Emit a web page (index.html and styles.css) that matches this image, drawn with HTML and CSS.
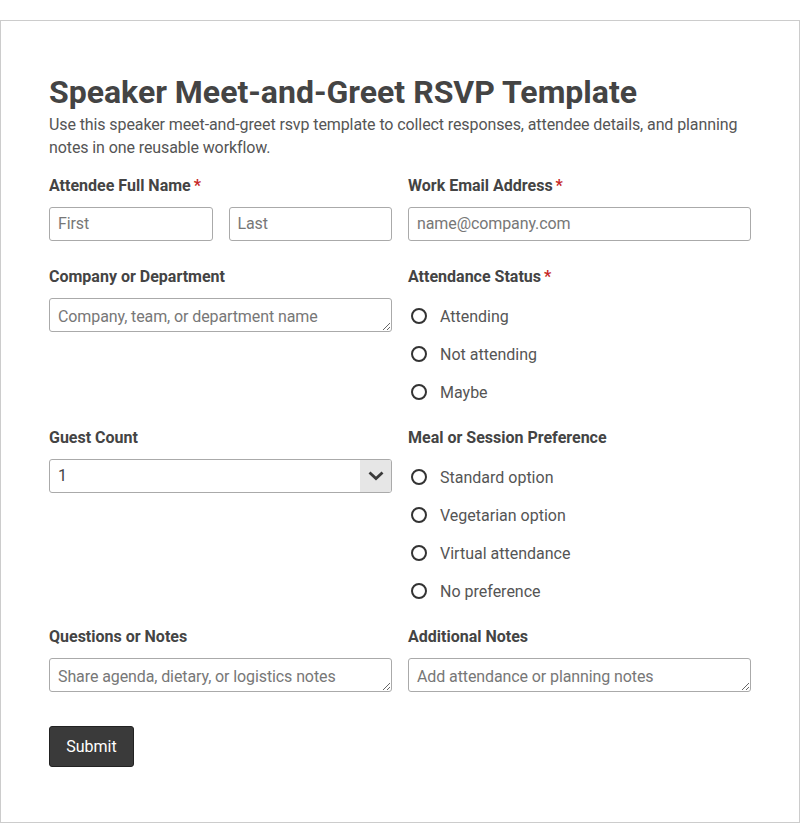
FILE: index.html
```html
<!DOCTYPE html>
<html lang="en">
<head>
    <meta charset="UTF-8">
    <title>Speaker Meet-and-Greet RSVP Template</title>
    <link rel="stylesheet" href="styles.css">
</head>
<body>
    <form class="form-card">
        <h1 class="form-title">Speaker Meet-and-Greet RSVP Template</h1>
        <p class="form-desc">Use this speaker meet-and-greet rsvp template to collect responses, attendee details, and planning notes in one reusable workflow.</p>

        <div class="form-grid">
            <div class="field">
                <label class="field-label">Attendee Full Name<span class="req">*</span></label>
                <div class="name-row">
                    <input class="text-input" type="text" placeholder="First">
                    <input class="text-input" type="text" placeholder="Last">
                </div>
            </div>
            <div class="field">
                <label class="field-label">Work Email Address<span class="req">*</span></label>
                <input class="text-input" type="email" placeholder="name@company.com">
            </div>

            <div class="field">
                <label class="field-label">Company or Department</label>
                <textarea class="text-input text-area" rows="1" placeholder="Company, team, or department name"></textarea>
            </div>
            <div class="field">
                <label class="field-label">Attendance Status<span class="req">*</span></label>
                <div class="radio-list">
                    <label class="radio-item"><input type="radio" name="status"> Attending</label>
                    <label class="radio-item"><input type="radio" name="status"> Not attending</label>
                    <label class="radio-item"><input type="radio" name="status"> Maybe</label>
                </div>
            </div>

            <div class="field">
                <label class="field-label">Guest Count</label>
                <div class="select-wrap">
                    <select class="text-input select-input">
                        <option>1</option>
                        <option>2</option>
                        <option>3</option>
                        <option>4</option>
                    </select>
                    <span class="select-arrow">
                        <svg width="16" height="16" viewBox="0 0 16 16"><path d="M1.5 4.5 L8 10.5 L14.5 4.5" fill="none" stroke="#3a3a3a" stroke-width="2.8"/></svg>
                    </span>
                </div>
            </div>
            <div class="field">
                <label class="field-label">Meal or Session Preference</label>
                <div class="radio-list">
                    <label class="radio-item"><input type="radio" name="meal"> Standard option</label>
                    <label class="radio-item"><input type="radio" name="meal"> Vegetarian option</label>
                    <label class="radio-item"><input type="radio" name="meal"> Virtual attendance</label>
                    <label class="radio-item"><input type="radio" name="meal"> No preference</label>
                </div>
            </div>

            <div class="field">
                <label class="field-label">Questions or Notes</label>
                <textarea class="text-input text-area" rows="1" placeholder="Share agenda, dietary, or logistics notes"></textarea>
            </div>
            <div class="field">
                <label class="field-label">Additional Notes</label>
                <textarea class="text-input text-area" rows="1" placeholder="Add attendance or planning notes"></textarea>
            </div>
        </div>

        <button class="submit-btn" type="button">Submit</button>
    </form>
</body>
</html>
```

FILE: styles.css
```css
* {
    box-sizing: border-box;
}

body {
    margin: 20px 0 0;
    font-family: Roboto, "Liberation Sans", Arial, sans-serif;
    color: #444;
    background: #fff;
}

.form-card {
    border: 1px solid #ccc;
    padding: 52px 48px 55px;
}

.form-title {
    margin: 0 0 2px;
    font-size: 32px;
    line-height: 38px;
    font-weight: 700;
    color: #444;
}

.form-desc {
    margin: 0 0 14px;
    font-size: 16px;
    line-height: 23px;
    letter-spacing: -0.1px;
    color: #555;
}

.form-grid {
    display: grid;
    grid-template-columns: 1fr 1fr;
    column-gap: 16px;
    row-gap: 23px;
}

.field {
    display: flex;
    flex-direction: column;
}

.field-label {
    font-size: 16px;
    line-height: 24px;
    font-weight: 700;
    color: #444;
    padding-top: 1px;
    margin-bottom: 9px;
}

.req {
    color: #c62828;
    margin-left: 3px;
}

.name-row {
    display: grid;
    grid-template-columns: 1fr 1fr;
    gap: 16px;
}

.text-input {
    width: 100%;
    height: 34px;
    padding: 0 8px 1px;
    border: 1px solid #aaa;
    border-radius: 3px;
    font-family: inherit;
    font-size: 16px;
    color: #444;
    background: #fff;
}

.text-input::placeholder {
    color: #777;
    letter-spacing: -0.1px;
}

.text-area {
    padding: 8px 8px 4px;
    line-height: 20px;
    resize: vertical;
    display: block;
}

.select-wrap {
    position: relative;
}

.select-input {
    appearance: none;
    -webkit-appearance: none;
    padding-right: 40px;
}

.select-arrow {
    position: absolute;
    top: 1px;
    right: 1px;
    bottom: 1px;
    width: 31px;
    background: #e6e6e6;
    border-radius: 0 2px 2px 0;
    display: flex;
    align-items: center;
    justify-content: center;
    pointer-events: none;
}

.radio-list {
    display: flex;
    flex-direction: column;
    gap: 18px;
    padding-top: 8px;
}

.radio-item {
    display: flex;
    align-items: center;
    height: 20px;
    font-size: 16px;
    color: #555;
    gap: 13px;
}

.radio-item input {
    appearance: none;
    -webkit-appearance: none;
    margin: 0 0 0 3px;
    width: 16px;
    height: 16px;
    border: 2px solid #333;
    border-radius: 50%;
}

.submit-btn {
    margin-top: 34px;
    height: 41px;
    width: 85px;
    padding: 0;
    background: #3a3a3a;
    border: 1px solid #222;
    border-radius: 3px;
    color: #fff;
    font-family: inherit;
    font-size: 16px;
}
```
